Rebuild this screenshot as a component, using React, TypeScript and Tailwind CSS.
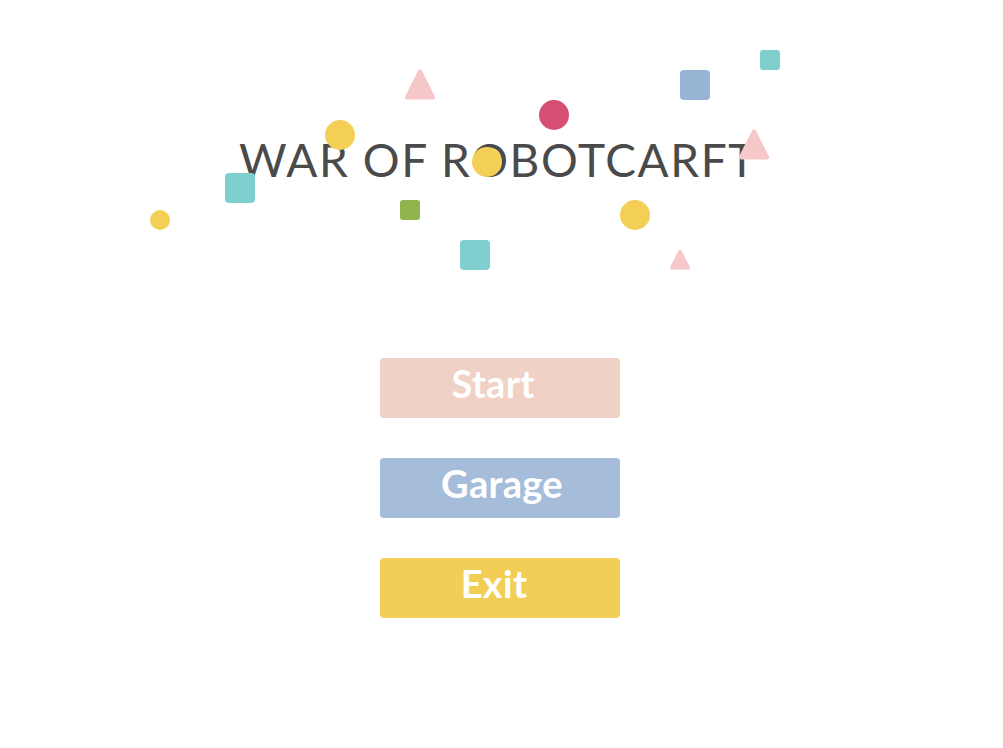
import React from "react";

const Tri = ({ className, color }: { className: string; color: string }) => (
  <svg className={className} viewBox="0 0 30 31" fill={color}>
    <polygon points="15,3 27.5,28 2.5,28" stroke={color} strokeWidth="5" strokeLinejoin="round" />
  </svg>
);

export default function App() {
  return (
    <div className="relative w-[1003px] h-[748px] bg-white overflow-hidden" style={{ fontFamily: "Lato, 'Noto Sans', sans-serif" }}>
      {/* shape behind title */}
      <Tri className="absolute left-[739px] top-[129px] w-[30px] h-[31px]" color="#f7c8c9" />

      <div className="w-[1000px] flex flex-col items-center">
        <h1 className="mt-[130px] h-[60px] text-[46px] leading-[60px] font-normal text-[#4a4a4a] tracking-[1.6px] pr-[4px]">
          WAR OF ROBOTCARFT
        </h1>
        <div className="mt-[168px] flex flex-col gap-10">
          <button className="w-[240px] h-[60px] rounded-[4px] bg-[#efd1c6] text-white font-bold text-[38px] leading-none pr-[14px] pb-[10px] tracking-[0.3px]">
            Start
          </button>
          <button className="w-[240px] h-[60px] rounded-[4px] bg-[#a5bdda] text-white font-bold text-[38px] leading-none pl-[4px] pb-[10px] tracking-[0.3px]">
            Garage
          </button>
          <button className="w-[240px] h-[60px] rounded-[4px] bg-[#f3ce56] text-white font-bold text-[38px] leading-none pr-[12px] pb-[10px] tracking-[0.3px]">
            Exit
          </button>
        </div>
      </div>

      {/* confetti shapes over title */}
      <div className="absolute left-[325px] top-[120px] w-[30px] h-[30px] rounded-full bg-[#f3cf55]" />
      <Tri className="absolute left-[405px] top-[69px] w-[30px] h-[31px]" color="#f7c8c9" />
      <div className="absolute left-[225px] top-[173px] w-[30px] h-[30px] rounded-[4px] bg-[#80cfcf]" />
      <div className="absolute left-[150px] top-[210px] w-[20px] h-[20px] rounded-full bg-[#f3cf55]" />
      <div className="absolute left-[400px] top-[200px] w-[20px] h-[20px] rounded-[3px] bg-[#90b54c]" />
      <div className="absolute left-[539px] top-[100px] w-[30px] h-[30px] rounded-full bg-[#d64f74]" />
      <div className="absolute left-[680px] top-[70px] w-[30px] h-[30px] rounded-[4px] bg-[#98b4d5]" />
      <div className="absolute left-[760px] top-[50px] w-[20px] h-[20px] rounded-[3px] bg-[#80cfcf]" />
      <div className="absolute left-[472px] top-[147px] w-[30px] h-[30px] rounded-full bg-[#f3cf55]" />
      <div className="absolute left-[620px] top-[200px] w-[30px] h-[30px] rounded-full bg-[#f3cf55]" />
      <div className="absolute left-[460px] top-[240px] w-[30px] h-[30px] rounded-[4px] bg-[#80cfcf]" />
      <Tri className="absolute left-[670px] top-[249px] w-[20px] h-[21px]" color="#f7c8c9" />
    </div>
  );
}
